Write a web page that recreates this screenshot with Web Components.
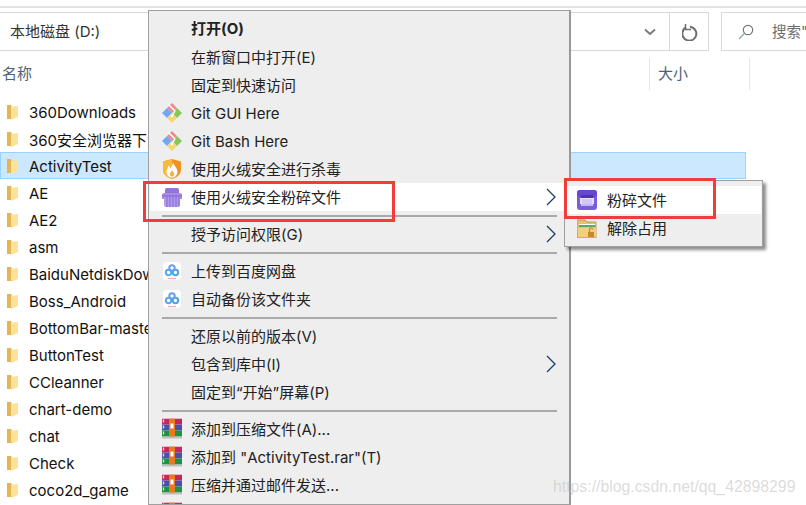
<!DOCTYPE html>
<html><head><meta charset="utf-8"><style>
html,body{margin:0;padding:0;width:806px;height:505px;overflow:hidden;background:#fff}
body{position:relative;font:15px "Inter","Noto Sans CJK SC",sans-serif;color:#1a1a1a}
</style></head><body>
<x-explorer>
  <x-file>360Downloads</x-file><x-file>360安全浏览器下载</x-file><x-file selected>ActivityTest</x-file><x-file>AE</x-file><x-file>AE2</x-file><x-file>asm</x-file><x-file>BaiduNetdiskDownload</x-file><x-file>Boss_Android</x-file><x-file>BottomBar-master</x-file><x-file>ButtonTest</x-file><x-file>CCleanner</x-file><x-file>chart-demo</x-file><x-file>chat</x-file><x-file>Check</x-file><x-file>coco2d_game</x-file>
</x-explorer>
<x-menu style="left:148px;top:10px;width:423px;height:495px">
  <x-item up><b>打开(O)</b></x-item>
  <x-item>在新窗口中打开(E)</x-item>
  <x-item>固定到快速访问</x-item>
  <x-item icon="git" lat>Git GUI Here</x-item>
  <x-item icon="git" lat>Git Bash Here</x-item>
  <x-item icon="shield">使用火绒安全进行杀毒</x-item>
  <x-item icon="shred" hot arrow>使用火绒安全粉碎文件</x-item>
  <x-sep></x-sep>
  <x-item arrow>授予访问权限(G)</x-item>
  <x-sep></x-sep>
  <x-item icon="cloud">上传到百度网盘</x-item>
  <x-item icon="cloud">自动备份该文件夹</x-item>
  <x-sep></x-sep>
  <x-item>还原以前的版本(V)</x-item>
  <x-item arrow>包含到库中(I)</x-item>
  <x-item>固定到“开始”屏幕(P)</x-item>
  <x-sep></x-sep>
  <x-item icon="rar">添加到压缩文件(A)...</x-item>
  <x-item icon="rar">添加到 "ActivityTest.rar"(T)</x-item>
  <x-item icon="rar">压缩并通过邮件发送...</x-item>
  <x-item icon="rar"></x-item>
</x-menu>
<x-menu sub style="left:564px;top:180px;width:199px;height:67px">
  <x-item sub icon="shred2" hot>粉碎文件</x-item>
  <x-item sub icon="unlock">解除占用</x-item>
</x-menu>
<x-mark style="left:143px;top:181px;width:252px;height:41px"></x-mark>
<x-mark style="left:564px;top:178px;width:152px;height:41px"></x-mark>
<x-watermark>https://blog.csdn.net/qq_42898299</x-watermark>
<script>
const ICONS={
git:`<svg width="22" height="22" viewBox="0 0 22 22"><path d="M1 11l5-5 5 5-5 5z" fill="#6fa8f5"/><path d="M11 11l5-5 5 5-5 5z" fill="#86c95a"/><path d="M6 6l5-5 5 5-5 5z" fill="#f08a8a"/><path d="M6 16l5-5 5 5-5 5z" fill="#f7d774"/><path d="M8 3l6 6" stroke="#fff" stroke-width="1.6"/><path d="M14 9l-3 5" stroke="#fff" stroke-width="1.4"/><circle cx="11" cy="14" r="1.4" fill="#fff"/></svg>`,
shield:`<svg width="20" height="22" viewBox="0 0 20 22"><path d="M10 1l9 2.500v8c0 5-4 8-9 9.500C5 19.500 1 16.500 1 11.500v-8z" fill="#ee9320"/><path d="M10 1v20C5 19.500 1 16.500 1 11.500v-8z" fill="#f8b93c"/><path d="M11 4c.5 3.500 4.500 5.500 4.500 10a5.500 5.500 0 0 1-11 0c0-3 2-4.500 2-6.500 1 .8 1.800 1.800 2 3 1-2 2.500-4 2.500-6.500z" fill="#fff"/><path d="M10 12c.8 1.800 2.200 2.500 2.200 4.200a2.200 2.200 0 0 1-4.400 0c0-1.800 1.800-2.400 2.200-4.200z" fill="#f6b14a"/></svg>`,
shred:`<svg width="22" height="22" viewBox="0 0 22 22"><path d="M4 8V4a2 2 0 0 1 2-2h10a2 2 0 0 1 2 2v4z" fill="#9274dc"/><path d="M1 9a2 2 0 0 1 2-2h16a2 2 0 0 1 2 2v4H1z" fill="#a88ce6"/><path d="M3 11h16v8a2 2 0 0 1-2 2H5a2 2 0 0 1-2-2z" fill="#b09bec"/><path d="M6 11v10M9 11v10M12 11v10M15 11v10M18 11v9" stroke="#8a6cd8" stroke-width="1.1"/><path d="M1 10h20" stroke="#7e60cc"/></svg>`,
shred2:`<svg width="20" height="20" viewBox="0 0 20 20"><rect width="20" height="20" rx="3" fill="#7a5ce0"/><rect y="0" width="20" height="7" rx="3" fill="#6748cc"/><rect x="4" y="5" width="12" height="4" fill="#4f35a8"/><path d="M3 8h14v6H3z" fill="#e6def9"/><path d="M4 14h12v2H4z" fill="#cfc3f3"/><path d="M6 9v7M8 9v7M10 9v7M12 9v7M14 9v7" stroke="#b6a5ec" stroke-width=".8"/></svg>`,
unlock:`<svg width="20" height="20" viewBox="0 0 20 20"><path d="M0 2h8l2 2h9v16H0z" fill="#e9c06a" stroke="#c9955a"/><path d="M2 6h16v4H2z" fill="#fff"/><path d="M2 7h16v2.500H2z" fill="#5da85d"/><path d="M1 10h18v9H1z" fill="#f2cf7c"/><rect x="11" y="14" width="6" height="5" fill="#c9872c"/><path d="M12.500 14v-2.500a1.500 1.500 0 0 1 3 0" fill="none" stroke="#c9872c" stroke-width="1.200"/></svg>`,
cloud:`<svg width="18" height="18" viewBox="0 0 18 18"><rect width="18" height="18" rx="4" fill="#fff"/><circle cx="5.500" cy="10.500" r="2.700" fill="none" stroke="#5aa9ee" stroke-width="2"/><circle cx="12.500" cy="10.500" r="2.700" fill="none" stroke="#4aa5e8" stroke-width="2"/><circle cx="9" cy="6" r="2.700" fill="none" stroke="#6a9fe8" stroke-width="2"/><path d="M5 16.500h8" stroke="#f6a5b8" stroke-width="1.200"/></svg>`,
rar:`<svg width="20" height="21" viewBox="0 0 20 21"><rect x="0" y="0" width="20" height="6" fill="#c4265e"/><rect x="0" y="6" width="20" height="6" fill="#4a4fa8"/><rect x="0" y="12" width="20" height="6" fill="#1f9147"/><rect y="18" width="20" height="2" fill="#bdbdbd"/><rect x="7" y="0" width="6" height="18" fill="#e87a1d"/><path d="M1.500 1v16" stroke="#f3e29a" stroke-dasharray="3 3" stroke-width="1.400"/><rect x="8.500" y="5" width="3" height="5" fill="#fff"/></svg>`};
function def(name,css,html,init){customElements.define(name,class extends HTMLElement{constructor(){super();const r=this.attachShadow({mode:'open'});r.innerHTML=`<style>${css}</style>${html}`;}connectedCallback(){if(init)init(this,this.shadowRoot)}})}
def('x-explorer',`
:host{display:flex;flex-direction:column;width:806px;height:505px;overflow:hidden}
.rule{height:2px;background:#e3e3e3;margin-top:6px;flex:none}
.bar{display:flex;height:39px;margin-top:4px;box-sizing:border-box;flex:none}
.addr{width:709px;box-sizing:border-box;border:1px solid #d9d9d9;border-left:0;display:flex;align-items:center;padding-left:10px;color:#333;font-size:15px}
.addr span{flex:1;padding-bottom:2px}
.chev{width:39px;display:flex;justify-content:center}
.ref{width:39px;height:100%;border-left:1px solid #d9d9d9;display:flex;align-items:center;justify-content:center;padding-left:2px;box-sizing:border-box}
.search{margin-left:12px;flex:1;min-width:0;border:1px solid #d9d9d9;border-right:0;display:flex;align-items:center;color:#6d6d6d;font-size:14.500px;padding-left:16px;gap:18px;white-space:nowrap;overflow:hidden}
.search svg{flex:none}
.search span{padding-bottom:2px}
.head{height:32px;margin-top:7px;display:flex;color:#4c607a;font-size:15px;line-height:32px;flex:none}
.head .n{width:650px;padding-left:2px;box-sizing:border-box;border-right:1px solid #e5e5e5}
.head .s{width:100px;padding-left:8px;box-sizing:border-box;border-right:1px solid #e5e5e5}
.list{margin-top:8px;display:flex;flex-direction:column}
`,`<div class="rule"></div>
<div class="bar"><div class="addr"><span>本地磁盘 (D:)</span><div class="chev"><svg width="12" height="8" viewBox="0 0 12 8"><path d="M1 1.500l5 4.500 5-4.500" fill="none" stroke="#777" stroke-width="1.800"/></svg></div><div class="ref"><svg width="17" height="18" viewBox="0 0 17 18"><path d="M4 4.500a7 7 0 1 0 4-.8" fill="none" stroke="#6e6e6e" stroke-width="2"/><path d="M3.500 1v5.500H9" fill="none" stroke="#6e6e6e" stroke-width="1.500"/></svg></div></div>
<div class="search"><svg width="16" height="16" viewBox="0 0 16 16"><circle cx="10" cy="6" r="4.700" fill="none" stroke="#777" stroke-width="1.200"/><path d="M6.500 9.500L1 15" stroke="#8aa" stroke-width="1.300"/></svg><span>搜索"</span></div></div>
<div class="head"><div class="n">名称</div><div class="s">大小</div></div>
<div class="list"><slot></slot></div>`);
def('x-file',`
:host{display:flex;align-items:center;height:27px;box-sizing:border-box;width:746px;padding-left:6px;gap:10px;font-size:15px;color:#111;white-space:nowrap}
:host([selected]){background:#cce8ff;box-shadow:inset 0 0 0 1px #99d1ff}
svg{flex:none}
span{padding-top:2px}
`,`<svg width="13" height="16" viewBox="0 0 13 16"><path d="M1 1h4l1 2v12H1z" fill="#e5b64f"/><path d="M5 3l7-1v11l-7 3z" fill="#fbe29a"/></svg><span><slot></slot></span>`);
def('x-menu',`
:host{position:absolute;display:block;box-sizing:border-box;background:#eee;border:1px solid #a0a0a0;padding:4px 0 0 1px;overflow:hidden}
:host([sub]){box-shadow:3px 3px 3px rgba(0,0,0,.45);overflow:visible;padding:5px 1px 0 1px}
:host(:not([sub])){border-right:2px solid #999}
`,`<slot></slot>`);
def('x-item',`
:host{display:flex;align-items:center;height:28px;box-sizing:border-box;position:relative;padding:0 0 2px 41px;font-size:15px;color:#222;white-space:nowrap}
:host([lat]){padding-bottom:0}
:host([up]){padding-bottom:3px}
:host([hot]){background:#fff}
.ic{position:absolute;left:11px;top:50%;transform:translateY(-50%);display:flex;width:22px;justify-content:center}
:host([sub]) .ic{left:10px}
.ar{position:absolute;right:13px;top:50%;transform:translateY(-50%);display:flex}
::slotted(b){font-weight:700}
`,`<span class="ic"></span><slot></slot><span class="ar"></span>`,(h,r)=>{
 const i=h.getAttribute('icon');if(i)r.querySelector('.ic').innerHTML=ICONS[i];
 if(h.hasAttribute('arrow'))r.querySelector('.ar').innerHTML=`<svg width="10" height="18" viewBox="0 0 10 18"><path d="M1 1l8 8-8 8" fill="none" stroke="#1c3f6e" stroke-width="1.300"/></svg>`;
});
def('x-sep',`:host{display:flex;align-items:center;height:9px;padding:0 12px}div{height:2px;width:100%;background:#a9a9a9}`,`<div></div>`);
def('x-mark',`:host{position:absolute;display:block;box-sizing:border-box;border:3px solid #f23c3c}`,``);
def('x-watermark',`:host{position:absolute;left:553px;top:478px;font:15.800px "Liberation Sans",sans-serif;color:rgba(190,190,190,.55);white-space:nowrap}`,`<slot></slot>`);
</script>
</body></html>
